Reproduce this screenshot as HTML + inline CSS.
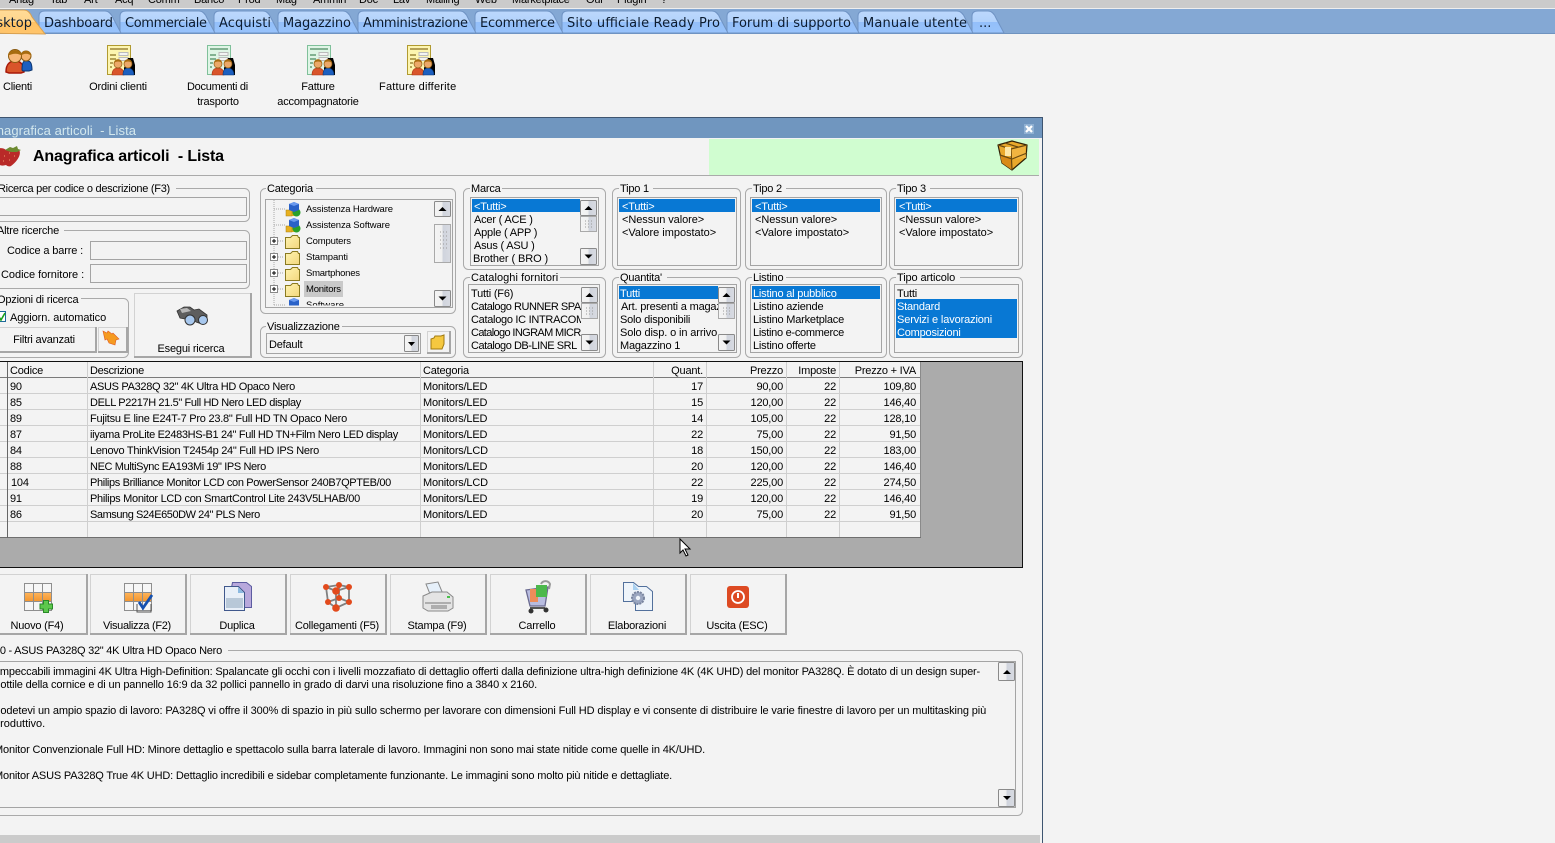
<!DOCTYPE html>
<html lang="it"><head><meta charset="utf-8"><title>Anagrafica articoli - Lista</title>
<style>
html,body{margin:0;padding:0;background:#f3f3f3;overflow:hidden;width:1555px;height:843px}
svg{display:block}
text{font-family:"Liberation Sans",Arial,sans-serif;font-size:11px;letter-spacing:-.2px;fill:#000;white-space:pre}
.t{font-family:"DejaVu Sans",Verdana,sans-serif;font-size:13px;letter-spacing:0;fill:#0c1c30}
.r{text-anchor:end}.c{text-anchor:middle}
text.w{fill:#fff}
.g{fill:none;stroke:#aaa;stroke-width:1}
.b{fill:none;stroke:#a4a4a4;stroke-width:1}
.s{font-size:9.5px;letter-spacing:0}
.sel{fill:#0878d4}
.btn{fill:#f3f3f3;stroke:#d2d2d2;stroke-width:1}
.bs{fill:none;stroke:#a6a6a6;stroke-width:2}
.l{stroke:#cfcfcf;stroke-width:1}
.bg{fill:#f3f3f3}
</style></head><body>
<svg width="1555" height="843" viewBox="0 0 1555 843" xmlns="http://www.w3.org/2000/svg">
<defs>
<linearGradient id="tb" x1="0" y1="0" x2="0" y2="1"><stop offset="0" stop-color="#bcd8fc"/><stop offset=".5" stop-color="#b2d2fb"/><stop offset=".5" stop-color="#93bffa"/><stop offset="1" stop-color="#98c3fb"/></linearGradient>
<linearGradient id="to" x1="0" y1="0" x2="0" y2="1"><stop offset="0" stop-color="#ffdc98"/><stop offset=".5" stop-color="#ffd58c"/><stop offset=".5" stop-color="#ffc264"/><stop offset="1" stop-color="#ffc56c"/></linearGradient>
<linearGradient id="sb" x1="0" y1="0" x2="1" y2="0"><stop offset="0" stop-color="#f4f4f4"/><stop offset=".5" stop-color="#f0f0f0"/><stop offset=".5" stop-color="#cfd3dc"/><stop offset="1" stop-color="#d8dbe2"/></linearGradient>
<linearGradient id="fd" x1="0" y1="0" x2="1" y2="1"><stop offset="0" stop-color="#fff3b0"/><stop offset="1" stop-color="#f2d77e"/></linearGradient>
<linearGradient id="or" x1="0" y1="0" x2="0" y2="1"><stop offset="0" stop-color="#ffb45a"/><stop offset="1" stop-color="#f2952e"/></linearGradient>
<g id="up"><rect x=".5" y=".5" width="16" height="15" rx="1" fill="url(#sb)" stroke="#8a8a8a"/><path d="M4.500 10h8l-4-4z" fill="#000"/></g>
<g id="dn"><rect x=".5" y=".5" width="16" height="16" rx="1" fill="url(#sb)" stroke="#8a8a8a"/><path d="M4.500 6.500h8l-4 4z" fill="#000"/></g>
<g id="th"><rect x=".5" y=".5" width="16" height="15" fill="url(#sb)" stroke="#a9a9a9"/><path d="M5 5h1M8 5h1M11 5h1M5 8h1M8 8h1M11 8h1M5 11h1M8 11h1M11 11h1" stroke="#9a9a9a"/></g>
<g id="ppl"><path d="M1 25c0-8 4-11 9-11s9 3 9 11l-3 1H4z" fill="#d9552a" stroke="#a81808" stroke-width="1.500"/><path d="M17 23c0-6 1-9 3-9h3c3 0 4 3 4 9l-3 1h-6z" fill="#1c5fc0" stroke="#0a3570"/><circle cx="21" cy="9" r="5" fill="#f5b26c" stroke="#8a5a10"/><path d="M15.500 9c0-7 11-7 11 0-3-3-8-3-11 0z" fill="#a86c10"/><circle cx="10" cy="9" r="6.500" fill="#f8b878" stroke="#8a5a10"/><path d="M3 9c0-8 14-8 14 0-3-3-10-3-14 0z" fill="#a86c10"/></g>
<g id="pp2"><path d="M17 30V23l4-10h5l2 7v10z" fill="#000" transform="translate(0 0)"/><path d="M5 30c0-5 2-7 6-7s6 2 6 7z" fill="#d9552a" stroke="#a83010" stroke-width=".6"/><path d="M16 30c0-5 2-7 5-7s6 2 6 7z" fill="#1c5fc0" stroke="#0a3570" stroke-width=".6"/><circle cx="11" cy="19" r="4" fill="#eca868" stroke="#8a5a10" stroke-width=".7"/><circle cx="21" cy="19" r="4" fill="#eca868" stroke="#8a5a10" stroke-width=".7"/><path d="M7 18c0-5 8-5 8 0-2-2-6-2-8 0zM17 18c0-5 8-5 8 0-2-2-6-2-8 0z" fill="#a86c10"/></g>
<g id="doc"><rect x=".5" y=".5" width="23" height="29" fill="#fdf5b0" stroke="#b09a30"/><path d="M3 4h18M3 10h6M3 14h6M3 18h3M3 22h2" stroke="#8a7020" stroke-width="1.300"/><rect x="12" y="7.500" width="9" height="3" fill="#f3f3f3" stroke="#bbb"/><rect x="12" y="12.500" width="9" height="3" fill="#f3f3f3" stroke="#bbb"/><use href="#pp2"/></g>
<g id="docg"><rect x=".5" y=".5" width="23" height="29" fill="#dff5e6" stroke="#7fc09a"/><path d="M3 4h18M3 10h6M3 14h6M3 18h3M3 22h2" stroke="#4a8a60" stroke-width="1.300"/><rect x="12" y="7.500" width="9" height="3" fill="#f3f3f3" stroke="#bbb"/><rect x="12" y="12.500" width="9" height="3" fill="#f3f3f3" stroke="#bbb"/><use href="#pp2"/></g>
<g id="fol"><path d="M.5 3.500h5l2-2h5l1 2h1v11H.5z" fill="url(#fd)" stroke="#8a7a20"/></g>
<g id="cub"><rect x="3" y="7" width="7" height="7" fill="#e8b020"/><rect x="0" y="8" width="6" height="6" fill="#e8b020" stroke="#a88010" stroke-width=".5"/><circle cx="10.500" cy="10.500" r="4" fill="#2aa02a"/><path d="M3 2l5-2 5 2v6l-5 2-5-2z" fill="#2a62c8"/><path d="M3 2l5 2 5-2-5-2z" fill="#6a9aee"/></g>
<g id="grd"><rect x=".5" y=".5" width="27" height="27" fill="#f6f6f6" stroke="#8e8e8e"/><rect x="1" y="9.500" width="26" height="9" fill="url(#or)"/><path d="M9.500 0v28M18.500 0v28M0 9.500h28M0 18.500h28" stroke="#8e8e8e"/></g>
<g id="ab"><rect class="btn" x=".5" y=".5" width="95" height="59"/><path class="bs" d="M0 60H96V0"/></g>
</defs>

<!-- menu -->
<rect width="1555" height="8" fill="#cbcbcb"/><rect y="8" width="1555" height="1" fill="#eee"/>
<g><text x="9" y="3">Anag</text><text x="50" y="3">Tab</text><text x="84" y="3">Art</text><text x="115" y="3">Acq</text><text x="148" y="3">Comm</text><text x="194" y="3">Banco</text><text x="238" y="3">Prod</text><text x="276" y="3">Mag</text><text x="313" y="3">Ammin</text><text x="359" y="3">Doc</text><text x="393" y="3">Lav</text><text x="426" y="3">Mailing</text><text x="475" y="3">Web</text><text x="512" y="3">Marketplace</text><text x="586" y="3">Oui</text><text x="617" y="3">Plugin</text><text x="661" y="3">?</text></g>

<!-- tab bar -->
<rect y="9" width="1555" height="25" fill="#84a8d4"/><rect y="33" width="1555" height="1" fill="#6f93bf"/>
<g fill="url(#tb)" stroke="#6f93c4">
<path d="M972 33V16Q972 11 978 11H988Q993 11 996 18L1004 33Z"/>
<path d="M858 33V16Q858 11 864 11H957Q962 11 965 18L973 33Z"/>
<path d="M727 33V16Q727 11 733 11H843Q848 11 851 18L859 33Z"/>
<path d="M562 33V16Q562 11 568 11H712Q717 11 720 18L728 33Z"/>
<path d="M475 33V16Q475 11 481 11H547Q552 11 555 18L563 33Z"/>
<path d="M358 33V16Q358 11 364 11H460Q465 11 468 18L476 33Z"/>
<path d="M278 33V16Q278 11 284 11H343Q348 11 351 18L359 33Z"/>
<path d="M214 33V16Q214 11 220 11H263Q268 11 271 18L279 33Z"/>
<path d="M120 33V16Q120 11 126 11H199Q204 11 207 18L215 33Z"/>
<path d="M39 33V16Q39 11 45 11H105Q110 11 113 18L121 33Z"/>
<path d="M-30 33V16Q-30 10 -24 10H24Q29 10 32 17L45 34Z" fill="url(#to)" stroke="#d8a050"/>
</g>
<text class="t r" x="32" y="27">Desktop</text>
<text class="t" x="44" y="27" textLength="69">Dashboard</text>
<text class="t" x="125" y="27" textLength="82">Commerciale</text>
<text class="t" x="219" y="27" textLength="52">Acquisti</text>
<text class="t" x="283" y="27" textLength="68">Magazzino</text>
<text class="t" x="363" y="27" textLength="105">Amministrazione</text>
<text class="t" x="480" y="27" textLength="75">Ecommerce</text>
<text class="t" x="567" y="27" textLength="153">Sito ufficiale Ready Pro</text>
<text class="t" x="732" y="27" textLength="119">Forum di supporto</text>
<text class="t" x="863" y="27" textLength="104">Manuale utente</text>
<text class="t" x="979" y="27">...</text>

<!-- desktop icons -->
<use href="#ppl" x="5" y="47"/>
<use href="#doc" x="107" y="45"/><use href="#docg" x="207" y="45"/><use href="#docg" x="307" y="45"/><use href="#doc" x="407" y="45"/>
<text x="3" y="90" textLength="29">Clienti</text>
<text class="c" x="118" y="90">Ordini clienti</text>
<text x="187" y="90" textLength="61">Documenti di</text><text class="c" x="218" y="105">trasporto</text>
<text class="c" x="318" y="90">Fatture</text><text class="c" x="318" y="105">accompagnatorie</text>
<text x="379" y="90" textLength="77">Fatture differite</text>

<!-- window -->
<rect x="0" y="117" width="1043" height="1" fill="#3e5570"/>
<rect x="1042" y="117" width="1" height="726" fill="#3e5570"/>
<rect x="0" y="118" width="1042" height="20" fill="#7096bf"/>
<text x="-12" y="135" textLength="148" style="font-size:13px;fill:#d3e8ee;letter-spacing:0">Anagrafica articoli  - Lista</text>
<rect x="1024" y="124" width="10" height="10" fill="#8fb0d2"/>
<path d="M1026 126l6 6M1032 126l-6 6" stroke="#fff" stroke-width="2.200"/>
<rect x="709" y="139" width="330" height="36" fill="#d0fdd0"/>
<rect x="0" y="175" width="1039" height="1" fill="#aaa"/>
<!-- strawberry -->
<path d="M-5 150c4-3 9-2 11 0 4-3 9-2 13 0 3 4-2 12-8 16-2 1-4 0-5-1-3 1-6 1-9-2z" fill="#b92a28"/>
<path d="M5 150l5-3 3 1 4-2 1 3 3 1-4 2h-6z" fill="#6d8a30"/>
<path d="M-3 153h1M4 156h1M9 153h1M14 156h1M9 160h1M3 161h1" stroke="#f0a070"/>
<text x="33" y="161" style="font-size:16px;font-weight:bold;letter-spacing:0" textLength="191">Anagrafica articoli  - Lista</text>
<!-- box -->
<path d="M998 145l14-4 15 4-1 13-14 12-10-7z" fill="#e9a92c" stroke="#2e2006" stroke-width="1.200" stroke-linejoin="round"/>
<path d="M1012 159l14-1-1-13-13 4z" fill="#f0b440"/>
<path d="M1002 163l10 7v-11l-12-4z" fill="#d88a18"/>
<path d="M998 145l13 4 16-4M1011 149l1 21M1000 155l12 4 15-6M1005 143l13 4" fill="none" stroke="#6a4a10" stroke-width="1.200"/>
<rect x="1005" y="147" width="6" height="9" fill="#fde7a6"/>

<!-- search groups -->
<rect class="g" x="-10.500" y="188.500" width="260" height="33" rx="5"/><rect class="bg" x="0" y="183" width="176" height="10"/><text x="-2" y="192" textLength="172">Ricerca per codice o descrizione (F3)</text>
<rect class="b" x="-5.500" y="197.500" width="252" height="18"/>
<rect class="g" x="-10.500" y="230.500" width="260" height="58" rx="5"/><rect class="bg" x="0" y="225" width="64" height="10"/><text x="-3" y="234">Altre ricerche</text>
<text x="7" y="254" textLength="76">Codice a barre :</text><rect class="b" x="90.500" y="241.500" width="156" height="18"/>
<text x="1" y="278" textLength="83">Codice fornitore :</text><rect class="b" x="90.500" y="264.500" width="156" height="18"/>
<rect class="g" x="-10.500" y="298.500" width="139" height="59" rx="5"/><rect class="bg" x="0" y="293" width="81" height="10"/><text x="-3" y="303">Opzioni di ricerca</text>
<rect x="-2.500" y="311.500" width="8" height="10" fill="#fff" stroke="#1c6a9a"/><path d="M-1 317l2 3 4-7" fill="none" stroke="#18a018" stroke-width="1.600"/>
<text x="10" y="321" textLength="96">Aggiorn. automatico</text>
<rect class="btn" x="-5.500" y="327.500" width="101" height="24"/><path class="bs" d="M-6 352H96V327"/><text class="c" x="44" y="343">Filtri avanzati</text>
<rect class="btn" x="98.500" y="327.500" width="28" height="24"/><path class="bs" d="M98 352H127V327"/>
<path d="M103 331l4 2 1-2 4 3 1-1 6 6-3 1-1 5-6-2-2-4-2 1z" fill="#f59a20" stroke="#e05a20" stroke-width=".6"/>
<rect class="btn" x="134.500" y="293.500" width="116" height="63"/><path class="bs" d="M134 357H251V293"/><text class="c" x="191" y="352">Esegui ricerca</text>
<!-- binoculars -->
<path d="M177 311l7-4h6l4 3 5-1 8 6 0 6-5 3-6-2-4-5-3 1-4 1-5-1z" fill="#5e5e5e" stroke="#333" stroke-width=".8"/>
<path d="M180 309l7-1 4 3-9 2z" fill="#b8b8b8"/>
<circle cx="190" cy="320" r="5" fill="#a8c8ee" stroke="#333"/><circle cx="203" cy="320" r="4.500" fill="#a8c8ee" stroke="#333"/>

<!-- categoria -->
<rect class="g" x="260.500" y="188.500" width="195" height="125" rx="5"/><rect class="bg" x="266" y="183" width="50" height="10"/><text x="267" y="192">Categoria</text>
<rect class="b" x="265.500" y="199.500" width="187" height="108"/>
<path d="M274 200v105M274 209h11M274 225h11M278 241h6M278 257h6M278 273h6M278 289h6M274 305h11" stroke="#aaa" stroke-dasharray="1 1" fill="none"/>
<use href="#cub" x="286" y="202"/><use href="#cub" x="286" y="218"/>
<use href="#fol" x="285" y="234"/><use href="#fol" x="285" y="250"/><use href="#fol" x="285" y="266"/><use href="#fol" x="285" y="282"/>
<g fill="#fff" stroke="#888"><rect x="270.500" y="237.500" width="7" height="7"/><rect x="270.500" y="253.500" width="7" height="7"/><rect x="270.500" y="269.500" width="7" height="7"/><rect x="270.500" y="285.500" width="7" height="7"/></g>
<path d="M272 241h4M274 239v4M272 257h4M274 255v4M272 273h4M274 271v4M272 289h4M274 287v4" stroke="#000"/>
<rect x="304" y="281" width="39" height="16" fill="#c9c9c9"/>
<text class="s" x="306" y="212" textLength="87">Assistenza Hardware</text><text class="s" x="306" y="228" textLength="84">Assistenza Software</text><text class="s" x="306" y="244" textLength="45">Computers</text><text class="s" x="306" y="260" textLength="42">Stampanti</text><text class="s" x="306" y="276" textLength="54">Smartphones</text><text class="s" x="306" y="292" textLength="35">Monitors</text>
<svg x="266" y="297" width="170" height="8.500"><use href="#cub" x="20" y="1"/><text class="s" x="40" y="11" textLength="38">Software</text></svg>
<use href="#up" x="434" y="201"/><rect x="434.500" y="224.500" width="16" height="38" fill="url(#sb)" stroke="#a9a9a9"/><path d="M440 232h1M443 232h1M446 232h1M440 236h1M443 236h1M446 236h1M440 240h1M443 240h1M446 240h1M440 244h1M443 244h1M446 244h1M440 248h1M443 248h1M446 248h1" stroke="#9a9a9a"/><use href="#dn" x="434" y="290"/>

<!-- visualizzazione -->
<rect class="g" x="260.500" y="326.500" width="195" height="31" rx="5"/><rect class="bg" x="266" y="321" width="76" height="10"/><text x="267" y="330">Visualizzazione</text>
<rect class="b" x="266.500" y="333.500" width="154" height="20"/><text x="269" y="348">Default</text>
<rect x="404.500" y="335.500" width="14" height="16" rx="1" fill="url(#sb)" stroke="#888"/><path d="M408 342h7l-3.500 4z" fill="#000"/>
<rect class="btn" x="427.500" y="331.500" width="22" height="21"/><path class="bs" d="M427 353H450V331"/>
<path d="M431 339l3-1 1-2h6l3-1v9l-2 5h-11z" fill="#f5c840" stroke="#a07a10"/>

<!-- marca -->
<rect class="g" x="463.500" y="188.500" width="142" height="81" rx="5"/><rect class="bg" x="470" y="183" width="32" height="10"/><text x="471" y="192">Marca</text>
<rect class="b" x="470.500" y="197.500" width="128" height="68"/><rect class="sel" x="472" y="199" width="108" height="13"/>
<text class="w" x="474" y="210">&lt;Tutti&gt;</text><text x="474" y="223">Acer ( ACE )</text><text x="474" y="236">Apple ( APP )</text><text x="474" y="249">Asus ( ASU )</text><text x="473" y="262" textLength="75">Brother ( BRO )</text>
<use href="#up" x="580" y="200"/><use href="#th" x="580" y="216"/><use href="#dn" x="580" y="248"/>

<!-- tipo 1..3 -->
<rect class="g" x="612.500" y="188.500" width="128" height="81" rx="5"/><rect class="bg" x="619" y="183" width="34" height="10"/><text x="620" y="192">Tipo 1</text>
<rect class="b" x="617.500" y="197.500" width="119" height="68"/><rect class="sel" x="619" y="199" width="116" height="13"/>
<text class="w" x="622" y="210">&lt;Tutti&gt;</text><text x="622" y="223" textLength="82">&lt;Nessun valore&gt;</text><text x="622" y="236" textLength="94">&lt;Valore impostato&gt;</text>
<rect class="g" x="745.500" y="188.500" width="141" height="81" rx="5"/><rect class="bg" x="752" y="183" width="34" height="10"/><text x="753" y="192">Tipo 2</text>
<rect class="b" x="750.500" y="197.500" width="131" height="68"/><rect class="sel" x="752" y="199" width="128" height="13"/>
<text class="w" x="755" y="210">&lt;Tutti&gt;</text><text x="755" y="223" textLength="82">&lt;Nessun valore&gt;</text><text x="755" y="236" textLength="94">&lt;Valore impostato&gt;</text>
<rect class="g" x="889.500" y="188.500" width="133" height="81" rx="5"/><rect class="bg" x="896" y="183" width="34" height="10"/><text x="897" y="192">Tipo 3</text>
<rect class="b" x="894.500" y="197.500" width="124" height="68"/><rect class="sel" x="896" y="199" width="121" height="13"/>
<text class="w" x="899" y="210">&lt;Tutti&gt;</text><text x="899" y="223" textLength="82">&lt;Nessun valore&gt;</text><text x="899" y="236" textLength="94">&lt;Valore impostato&gt;</text>

<!-- cataloghi -->
<rect class="g" x="463.500" y="277.500" width="142" height="80" rx="5"/><rect class="bg" x="470" y="272" width="90" height="10"/><text x="471" y="281" textLength="87">Cataloghi fornitori</text>
<rect class="b" x="468.500" y="284.500" width="131" height="68"/>
<text x="471" y="297">Tutti (F6)</text><text x="471" y="310" textLength="110">Catalogo RUNNER SPA</text><text x="471" y="323" textLength="114">Catalogo IC INTRACOM</text><text x="471" y="336" textLength="118">Catalogo INGRAM MICRO</text><text x="471" y="349" textLength="106">Catalogo DB-LINE SRL</text>
<rect class="bg" x="581" y="286" width="18" height="66"/>
<use href="#up" x="581" y="287"/><use href="#th" x="581" y="303"/><use href="#dn" x="581" y="334"/>

<!-- quantita -->
<rect class="g" x="612.500" y="277.500" width="128" height="80" rx="5"/><rect class="bg" x="619" y="272" width="48" height="10"/><text x="620" y="281">Quantita'</text>
<rect class="b" x="617.500" y="284.500" width="119" height="68"/><rect class="sel" x="619" y="286" width="99" height="13"/>
<text class="w" x="620" y="297">Tutti</text><text x="621" y="310" textLength="106">Art. presenti a magazz</text><text x="620" y="323">Solo disponibili</text><text x="620" y="336" textLength="97">Solo disp. o in arrivo</text><text x="620" y="349">Magazzino 1</text>
<rect class="bg" x="718" y="286" width="18" height="66"/>
<use href="#up" x="718" y="287"/><use href="#th" x="718" y="303"/><use href="#dn" x="718" y="334"/>

<!-- listino -->
<rect class="g" x="745.500" y="277.500" width="141" height="80" rx="5"/><rect class="bg" x="752" y="272" width="34" height="10"/><text x="753" y="281">Listino</text>
<rect class="b" x="750.500" y="284.500" width="131" height="68"/><rect class="sel" x="752" y="286" width="128" height="13"/>
<text class="w" x="753" y="297">Listino al pubblico</text><text x="753" y="310">Listino aziende</text><text x="753" y="323" textLength="91">Listino Marketplace</text><text x="753" y="336" textLength="91">Listino e-commerce</text><text x="753" y="349">Listino offerte</text>

<!-- tipo articolo -->
<rect class="g" x="889.500" y="277.500" width="133" height="80" rx="5"/><rect class="bg" x="896" y="272" width="64" height="10"/><text x="897" y="281" textLength="58">Tipo articolo</text>
<rect class="b" x="894.500" y="284.500" width="124" height="68"/><rect class="sel" x="896" y="299" width="121" height="39"/>
<text x="897" y="297">Tutti</text><text class="w" x="897" y="310">Standard</text><text class="w" x="897" y="323" textLength="95">Servizi e lavorazioni</text><text class="w" x="897" y="336">Composizioni</text>

<!-- grid -->
<rect x="0" y="361" width="1023" height="207" fill="#ababab"/>
<rect x="0" y="361" width="1023" height="1" fill="#111"/><rect x="0" y="567" width="1023" height="1" fill="#111"/><rect x="1022" y="361" width="1" height="207" fill="#111"/>
<rect x="0" y="362" width="920" height="176" fill="#f3f3f3"/>
<rect x="920" y="362" width="1" height="176" fill="#8a8a8a"/>
<rect x="0" y="377" width="920" height="1" fill="#7a7a7a"/>
<rect x="0" y="537" width="921" height="1" fill="#6f6f6f"/>
<g class="l"><path d="M0 393.500H920M0 409.500H920M0 425.500H920M0 441.500H920M0 457.500H920M0 473.500H920M0 489.500H920M0 505.500H920M0 521.500H920M87.500 362V537M420.500 362V537M653.500 362V537M706.500 362V537M786.500 362V537M839.500 362V537"/></g>
<rect x="7" y="362" width="1" height="176" fill="#666"/>
<text x="10" y="374">Codice</text><text x="90" y="374" textLength="54">Descrizione</text><text x="423" y="374">Categoria</text><text class="r" x="703" y="374">Quant.</text><text class="r" x="783" y="374">Prezzo</text><text class="r" x="836" y="374">Imposte</text><text class="r" x="916" y="374">Prezzo + IVA</text>

<text x="10" y="390">90</text><text x="90" y="390" textLength="205">ASUS PA328Q 32" 4K Ultra HD Opaco Nero</text><text x="423" y="390">Monitors/LED</text><text class="r" x="703" y="390">17</text><text class="r" x="783" y="390">90,00</text><text class="r" x="836" y="390">22</text><text class="r" x="916" y="390">109,80</text>
<text x="10" y="406">85</text><text x="90" y="406" textLength="211">DELL P2217H 21.5" Full HD Nero LED display</text><text x="423" y="406">Monitors/LED</text><text class="r" x="703" y="406">15</text><text class="r" x="783" y="406">120,00</text><text class="r" x="836" y="406">22</text><text class="r" x="916" y="406">146,40</text>
<text x="10" y="422">89</text><text x="90" y="422" textLength="257">Fujitsu E line E24T-7 Pro 23.8" Full HD TN Opaco Nero</text><text x="423" y="422">Monitors/LED</text><text class="r" x="703" y="422">14</text><text class="r" x="783" y="422">105,00</text><text class="r" x="836" y="422">22</text><text class="r" x="916" y="422">128,10</text>
<text x="10" y="438">87</text><text x="90" y="438" textLength="308">iiyama ProLite E2483HS-B1 24" Full HD TN+Film Nero LED display</text><text x="423" y="438">Monitors/LED</text><text class="r" x="703" y="438">22</text><text class="r" x="783" y="438">75,00</text><text class="r" x="836" y="438">22</text><text class="r" x="916" y="438">91,50</text>
<text x="10" y="454">84</text><text x="90" y="454" textLength="229">Lenovo ThinkVision T2454p 24" Full HD IPS Nero</text><text x="423" y="454">Monitors/LCD</text><text class="r" x="703" y="454">18</text><text class="r" x="783" y="454">150,00</text><text class="r" x="836" y="454">22</text><text class="r" x="916" y="454">183,00</text>
<text x="10" y="470">88</text><text x="90" y="470" textLength="176">NEC MultiSync EA193Mi 19" IPS Nero</text><text x="423" y="470">Monitors/LED</text><text class="r" x="703" y="470">20</text><text class="r" x="783" y="470">120,00</text><text class="r" x="836" y="470">22</text><text class="r" x="916" y="470">146,40</text>
<text x="11" y="486">104</text><text x="90" y="486" textLength="301">Philips Brilliance Monitor LCD con PowerSensor 240B7QPTEB/00</text><text x="423" y="486">Monitors/LCD</text><text class="r" x="703" y="486">22</text><text class="r" x="783" y="486">225,00</text><text class="r" x="836" y="486">22</text><text class="r" x="916" y="486">274,50</text>
<text x="10" y="502">91</text><text x="90" y="502" textLength="270">Philips Monitor LCD con SmartControl Lite 243V5LHAB/00</text><text x="423" y="502">Monitors/LED</text><text class="r" x="703" y="502">19</text><text class="r" x="783" y="502">120,00</text><text class="r" x="836" y="502">22</text><text class="r" x="916" y="502">146,40</text>
<text x="10" y="518">86</text><text x="90" y="518" textLength="170">Samsung S24E650DW 24" PLS Nero</text><text x="423" y="518">Monitors/LED</text><text class="r" x="703" y="518">20</text><text class="r" x="783" y="518">75,00</text><text class="r" x="836" y="518">22</text><text class="r" x="916" y="518">91,50</text>

<path d="M680 539v14l3-3 3 6 2-1-3-6h5z" fill="#fff" stroke="#000"/>

<!-- action buttons -->
<use href="#ab" x="-9" y="574"/><use href="#ab" x="90" y="574"/><use href="#ab" x="190" y="574"/><use href="#ab" x="290" y="574"/><use href="#ab" x="390" y="574"/><use href="#ab" x="490" y="574"/><use href="#ab" x="590" y="574"/><use href="#ab" x="690" y="574"/>
<text class="c" x="37" y="629">Nuovo (F4)</text><text class="c" x="137" y="629" textLength="68">Visualizza (F2)</text><text class="c" x="237" y="629">Duplica</text><text class="c" x="337" y="629" textLength="84">Collegamenti (F5)</text><text class="c" x="437" y="629">Stampa (F9)</text><text class="c" x="537" y="629">Carrello</text><text class="c" x="637" y="629">Elaborazioni</text><text class="c" x="737" y="629">Uscita (ESC)</text>
<!-- nuovo -->
<use href="#grd" x="24" y="583"/>
<path d="M43.500 600.500h5v3.500h4v5h-4v3.500h-5V609h-3.500v-5h3.500z" fill="#5cc84c" stroke="#2a8a28"/>
<!-- visualizza -->
<use href="#grd" x="124" y="583"/>
<path d="M137 604v8h14v-8" fill="none" stroke="#555"/><path d="M139 602l4 6 9-13" fill="none" stroke="#1450b0" stroke-width="2.800"/>
<!-- duplica -->
<path d="M232.500 582.500h14l5 4v21h-24z" fill="#b8a8dc" stroke="#5c5ca0"/>
<path d="M224.500 586.500h14l6 6v18h-20z" fill="#e8eff8" stroke="#40588c"/><rect x="226" y="598" width="17" height="10" fill="#b8c8d8"/><path d="M238 587v6h6z" fill="#8ab8e0"/>
<!-- collegamenti -->
<path d="M326 587l13-2 10 2v15l-13 6-8-6zM336 591v17M326 587l10 4 13-4M339 585v13M328 602l11-4 10 4" fill="none" stroke="#808080" stroke-width="1.800"/>
<g fill="#e24a1c"><circle cx="326" cy="587" r="3"/><circle cx="339" cy="585" r="3"/><circle cx="349" cy="587" r="3"/><circle cx="336" cy="591" r="3.800"/><circle cx="328" cy="602" r="3"/><circle cx="339" cy="598" r="3"/><circle cx="349" cy="602" r="3"/><circle cx="336" cy="608" r="3.800"/></g>
<!-- stampa -->
<path d="M426 584l12-2 5 12h-13z" fill="#e6f0fa" stroke="#888"/>
<path d="M423 596l9-4h15l6 5v11l-5 3h-20l-5-3z" fill="#e4e4e4" stroke="#8a8a8a"/><path d="M425 603h26M431 606h16M431 608h16" stroke="#777"/><rect x="447" y="596" width="3" height="2" fill="#4ac04c"/>
<!-- carrello -->
<path d="M526 590l22-3-3 19h-15z" fill="#b8bce0" stroke="#6a6a90" stroke-width="1.300"/><rect x="530" y="589" width="8" height="13" fill="#ee8c5a"/><rect x="536" y="585" width="11" height="12" fill="#4cb84c"/><path d="M541 584a5 5 0 0 1 9 0l-1 5" fill="none" stroke="#999" stroke-width="2"/><path d="M530 608h15" stroke="#555" stroke-width="2"/><circle cx="531" cy="611" r="2.500" fill="#333"/><circle cx="546" cy="610" r="2.500" fill="#333"/>
<!-- elaborazioni -->
<path d="M623.500 582.500h10l12 14v0" fill="#e6f0fa" stroke="#52709c"/><path d="M623.500 582.500v19h12v9h17v-19l-6-5h-8l-5-4z" fill="#eef4fa" stroke="#52709c"/><path d="M633 583l6 7h-6z" fill="#a8d0f0"/>
<circle cx="638" cy="598" r="6" fill="#9aa6c0" stroke="#7a86a0" stroke-width="2" stroke-dasharray="2 1"/><circle cx="638" cy="598" r="2.200" fill="#eef4fa"/>
<!-- uscita -->
<rect x="727" y="586" width="22" height="22" rx="3" fill="#dd4a22"/>
<circle cx="738" cy="597" r="6" fill="none" stroke="#fff" stroke-width="1.800"/><path d="M738 593v5" stroke="#fff" stroke-width="2"/>

<!-- description -->
<rect class="g" x="-10.500" y="650.500" width="1033" height="165" rx="5"/><rect class="bg" x="0" y="645" width="228" height="10"/>
<text x="-6" y="654" textLength="228">90 - ASUS PA328Q 32" 4K Ultra HD Opaco Nero</text>
<rect class="b" x="-5.500" y="661.500" width="1021" height="146"/>
<text x="-3" y="675" textLength="983">Impeccabili immagini 4K Ultra High-Definition: Spalancate gli occhi con i livelli mozzafiato di dettaglio offerti dalla definizione ultra-high definizione 4K (4K UHD) del monitor PA328Q. È dotato di un design super-</text>
<text x="-5" y="688" textLength="542">sottile della cornice e di un pannello 16:9 da 32 pollici pannello in grado di darvi una risoluzione fino a 3840 x 2160.</text>
<text x="-8" y="714" textLength="994">Godetevi un ampio spazio di lavoro: PA328Q vi offre il 300% di spazio in più sullo schermo per lavorare con dimensioni Full HD display e vi consente di distribuire le varie finestre di lavoro per un multitasking più</text>
<text x="-6" y="727" textLength="51">produttivo.</text>
<text x="-6" y="753" textLength="711">Monitor Convenzionale Full HD: Minore dettaglio e spettacolo sulla barra laterale di lavoro. Immagini non sono mai state nitide come quelle in 4K/UHD.</text>
<text x="-6" y="779" textLength="678">Monitor ASUS PA328Q True 4K UHD: Dettaglio incredibili e sidebar completamente funzionante. Le immagini sono molto più nitide e dettagliate.</text>
<rect x="998.500" y="662.500" width="16" height="18" rx="1" fill="url(#sb)" stroke="#8a8a8a"/><path d="M1003 674h8l-4-4z" fill="#000"/>
<rect x="998.500" y="789.500" width="16" height="17" rx="1" fill="url(#sb)" stroke="#8a8a8a"/><path d="M1003 796h8l-4 4z" fill="#000"/>

<rect x="0" y="835" width="1040" height="8" fill="#cbcbcb"/>
</svg>
</body></html>
